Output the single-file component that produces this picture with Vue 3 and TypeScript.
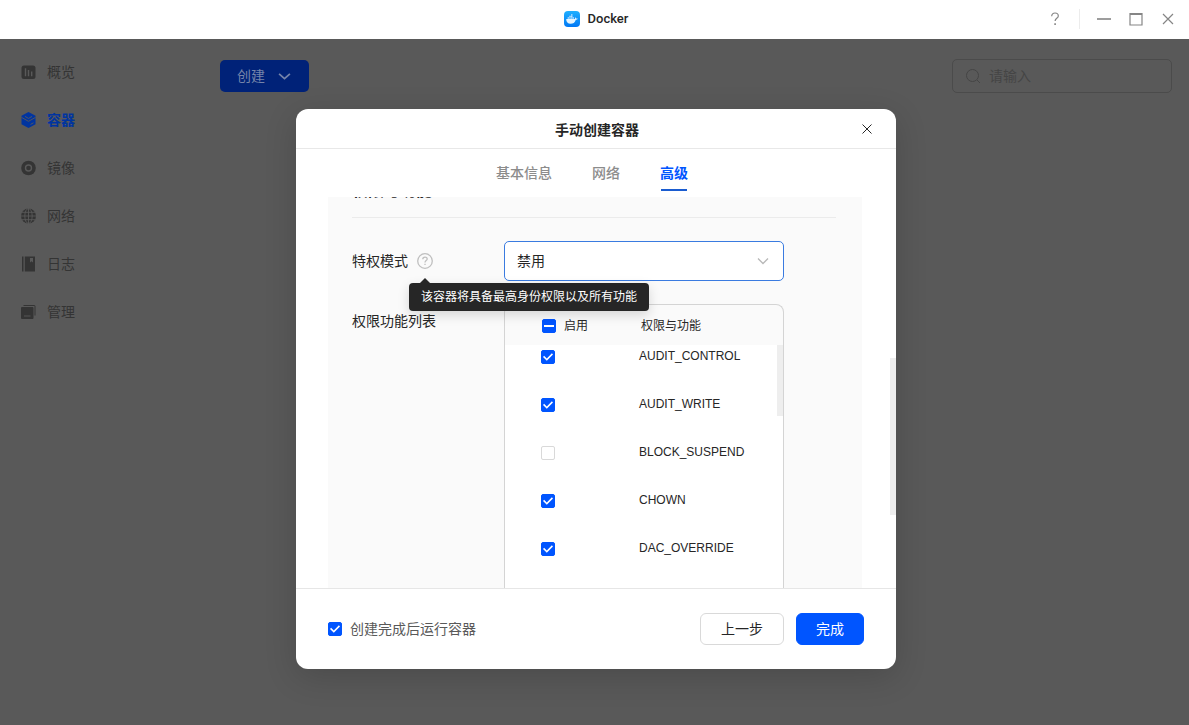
<script setup lang="ts">
import { ref } from 'vue'

type IconName = 'overview' | 'container' | 'image' | 'network' | 'log' | 'manage'

interface NavItem {
  icon: IconName
  label: string
}

interface Capability {
  name: string
  enabled: boolean
}

const navItems: NavItem[] = [
  { icon: 'overview', label: '概览' },
  { icon: 'container', label: '容器' },
  { icon: 'image', label: '镜像' },
  { icon: 'network', label: '网络' },
  { icon: 'log', label: '日志' },
  { icon: 'manage', label: '管理' },
]
const activeNav = ref<IconName>('container')

const tabs = ['基本信息', '网络', '高级']
const activeTab = ref('高级')

const privileged = ref('禁用')
const runAfterCreate = ref(true)
const keyword = ref('')

const capabilities = ref<Capability[]>([
  { name: 'AUDIT_CONTROL', enabled: true },
  { name: 'AUDIT_WRITE', enabled: true },
  { name: 'BLOCK_SUSPEND', enabled: false },
  { name: 'CHOWN', enabled: true },
  { name: 'DAC_OVERRIDE', enabled: true },
])
</script>

<template>
  <div class="window">
    <header class="titlebar">
      <span class="titlebar-side"></span>
      <div class="app-name">
        <svg class="app-logo" viewBox="0 0 16 16" aria-hidden="true">
          <defs>
            <linearGradient id="logo-fill" x1="0" y1="0" x2="0" y2="1">
              <stop offset="0" stop-color="#1fb0ff" />
              <stop offset="1" stop-color="#0078f5" />
            </linearGradient>
          </defs>
          <rect width="16" height="16" rx="4" fill="url(#logo-fill)" />
          <path
            d="M2.2 8h8.500c.5-.4.5-1.300.1-2 .8.3 1.200.9 1.300 1.500.6-.1 1.200 0 1.700.3-.4.8-1.300 1.100-2.100 1.100C10.900 11.500 9.100 12.700 6.600 12.700 3.900 12.700 2.100 11.200 2.200 8z"
            fill="#e4f4ff"
          />
          <path d="M3.600 6.300h1.500v1.400H3.600zM5.300 6.300h1.500v1.400H5.300zM7 6.300h1.500v1.400H7zM5.300 4.700h1.500v1.400H5.300zM7 4.700h1.500v1.400H7zM7 3.200h1.500v1.200H7zM8.700 6.300h1.300v1.400H8.700z" fill="#b9e2ff" />
        </svg>
        <span>Docker</span>
      </div>
      <div class="titlebar-side controls">
        <button type="button" class="control" aria-label="帮助">
          <svg viewBox="0 0 16 16"><path d="M4.700 5.200c0-2 1.400-3.200 3.300-3.200s3.300 1.200 3.300 2.900c0 2.400-3.200 2.500-3.200 5.100" /><path d="M8.100 12.300v1.700" stroke-width="1.600" /></svg>
        </button>
        <span class="control-rule"></span>
        <button type="button" class="control" aria-label="最小化">
          <svg viewBox="0 0 16 16"><path d="M1 8h14" stroke-width="1.600" /></svg>
        </button>
        <button type="button" class="control" aria-label="最大化">
          <svg viewBox="0 0 16 16"><path d="M2 2.500h12v11.500H2z" /><path d="M2 3h12" stroke-width="2" /></svg>
        </button>
        <button type="button" class="control" aria-label="关闭">
          <svg viewBox="0 0 16 16"><path d="M3 3l10 10M13 3L3 13" /></svg>
        </button>
      </div>
    </header>

    <div class="workspace">
      <nav class="sidebar">
        <button
          v-for="item in navItems"
          :key="item.icon"
          type="button"
          class="nav-item"
          :class="{ active: item.icon === activeNav }"
          @click="activeNav = item.icon"
        >
          <svg class="nav-icon" viewBox="0 0 16 16" aria-hidden="true">
            <template v-if="item.icon === 'overview'">
              <rect x="1.500" y="1.500" width="14" height="13.500" rx="2.500" />
              <path class="cut" d="M5.500 4.200v8M8.500 6v6.200M11.700 7.500v4.700" />
            </template>
            <template v-else-if="item.icon === 'container'">
              <path d="M8.500 0l7 3.800v8.400L8.500 16l-7-3.800V3.800z" />
              <path class="cut thin" d="M1.500 5.400l7 3.900 7-3.900M5 4.400l3.500 2 3.500-2M10.500 12.400l3-1.600" />
            </template>
            <template v-else-if="item.icon === 'image'">
              <circle cx="8.500" cy="8" r="7.300" />
              <circle class="cut" cx="8.500" cy="8" r="3" />
              <circle cx="8.500" cy="8" r="1.200" />
            </template>
            <template v-else-if="item.icon === 'network'">
              <circle cx="8.500" cy="8" r="7.500" />
              <path class="cut thin" d="M8.500 0v16M0 8h16M1.500 4.300h14M1.500 11.700h14" />
              <ellipse class="cut thin" cx="8.500" cy="8" rx="3.700" ry="7.500" />
            </template>
            <template v-else-if="item.icon === 'log'">
              <path d="M2 .5h1.500v15H2zM4.800 .5H15v15H4.800z" />
              <path class="gap" d="M10 2h3v4.500l-1.500-1.200L10 6.500z" />
            </template>
            <template v-else>
              <path d="M3.500 1H14a1.500 1.500 0 0 1 1.500 1.500v9h-1V2H3.500z" />
              <rect x="1" y="3" width="12.500" height="12" rx="1" />
              <path class="cut thin" d="M4 12h6.500" />
            </template>
          </svg>
          <span>{{ item.label }}</span>
        </button>
      </nav>

      <main class="main">
        <button type="button" class="create">
          <span>创建</span>
          <svg viewBox="0 0 12 12" aria-hidden="true"><path d="M1 3.500l5 4.500 5-4.500" /></svg>
        </button>
        <label class="search">
          <svg viewBox="0 0 16 16" aria-hidden="true"><circle cx="7.500" cy="7.500" r="6" /><path d="M12 12l3 3" /></svg>
          <input v-model="keyword" type="text" placeholder="请输入" aria-label="搜索" />
        </label>
      </main>

      <div class="backdrop">
        <section class="dialog" role="dialog" aria-labelledby="dialog-title">
          <header class="dialog-head">
            <h1 id="dialog-title">手动创建容器</h1>
            <button type="button" class="dialog-close" aria-label="关闭对话框">
              <svg viewBox="0 0 10 10"><path d="M.5 .5l9 9M9.500 .5l-9 9" /></svg>
            </button>
          </header>

          <div class="tabs" role="tablist">
            <button
              v-for="tab in tabs"
              :key="tab"
              type="button"
              role="tab"
              class="tab"
              :class="{ active: tab === activeTab }"
              :aria-selected="tab === activeTab"
              @click="activeTab = tab"
            >
              {{ tab }}
            </button>
          </div>

          <div class="dialog-body">
            <div class="panel">
              <h2 class="section-title">权限与功能</h2>

              <div class="field">
                <div class="field-label">
                  <label for="privileged">特权模式</label>
                  <span class="help">
                    <svg viewBox="0 0 16 16" aria-hidden="true">
                      <circle cx="8" cy="8" r="7.300" />
                      <path d="M5.800 6.300c0-1.400 1-2.200 2.200-2.200s2.200.8 2.200 1.900c0 1.500-2.200 1.700-2.200 3.400M8 10.800v1.200" />
                    </svg>
                    <span class="tooltip" role="tooltip">该容器将具备最高身份权限以及所有功能</span>
                  </span>
                </div>
                <div class="select">
                  <select id="privileged" v-model="privileged">
                    <option>禁用</option>
                    <option>启用</option>
                  </select>
                  <svg viewBox="0 0 12 12" aria-hidden="true"><path d="M1 3.500l5 5 5-5" /></svg>
                </div>
              </div>

              <div class="field grow">
                <div class="field-label">权限功能列表</div>
                <table class="capabilities">
                  <thead>
                    <tr>
                      <th>
                        <label class="check-label">
                          <input type="checkbox" class="check partial" :indeterminate="true" />启用
                        </label>
                      </th>
                      <th>权限与功能</th>
                    </tr>
                  </thead>
                  <tbody>
                    <tr v-for="cap in capabilities" :key="cap.name">
                      <td><input v-model="cap.enabled" type="checkbox" class="check" :aria-label="cap.name" /></td>
                      <td>{{ cap.name }}</td>
                    </tr>
                  </tbody>
                </table>
              </div>
            </div>
          </div>

          <footer class="dialog-foot">
            <label class="run-after">
              <input v-model="runAfterCreate" type="checkbox" class="check" />创建完成后运行容器
            </label>
            <button type="button" class="btn">上一步</button>
            <button type="button" class="btn primary">完成</button>
          </footer>
        </section>
      </div>
    </div>
  </div>
</template>

<style>
body {
  margin: 0;
}
</style>

<style scoped>
* {
  box-sizing: border-box;
}

.window {
  display: flex;
  flex-direction: column;
  min-height: 100vh;
  font-family: "Liberation Sans", "Noto Sans CJK SC", sans-serif;
  font-size: 14px;
  line-height: 20px;
  color: #262626;
  background: #595959;
}

button,
input,
select {
  margin: 0;
  padding: 0;
  border: 0;
  background: none;
  font: inherit;
  color: inherit;
}

svg {
  display: block;
  fill: none;
  stroke: currentColor;
}

/* Title bar */
.titlebar {
  display: flex;
  align-items: center;
  height: 39px;
  padding: 0 13px 2px 16px;
  background: #fff;
}

.titlebar-side {
  flex: 1;
}

.app-name {
  display: flex;
  align-items: center;
  gap: 8px;
  font-family: Roboto, sans-serif;
  font-size: 13px;
  font-weight: 500;
}

.app-logo {
  width: 16px;
  height: 16px;
  stroke: none;
}

.controls {
  display: flex;
  align-items: center;
  justify-content: flex-end;
  gap: 16px;
  color: #858585;
}

.control svg {
  width: 16px;
  height: 16px;
  stroke-width: 1.2;
}

.control-rule {
  width: 1px;
  height: 20px;
  background: #ececec;
}

/* Workspace behind the dialog */
.workspace {
  position: relative;
  display: flex;
  flex: 1;
}

.sidebar {
  display: flex;
  flex-direction: column;
  width: 200px;
  padding: 9px 0 0 20px;
}

.nav-item {
  display: flex;
  align-items: center;
  gap: 11px;
  height: 48px;
  color: #343434;
}

.nav-item.active {
  font-weight: 700;
  color: #0034a0;
}

.nav-icon {
  width: 16px;
  height: 16px;
  fill: currentColor;
  stroke: none;
}

.cut {
  fill: none;
  stroke: #595959;
  stroke-width: 1.4;
}

.cut.thin {
  stroke-width: 0.9;
}

.gap {
  fill: #595959;
}

.main {
  display: flex;
  flex: 1;
  align-items: flex-start;
  justify-content: space-between;
  padding: 20px 17px 20px 20px;
}

.create {
  display: flex;
  align-items: center;
  gap: 13px;
  height: 32px;
  margin-top: 1px;
  padding: 0 18px 0 17px;
  border-radius: 5px;
  background: #002278;
  color: #7584aa;
}

.create svg {
  width: 13px;
  height: 13px;
  stroke-width: 1.6;
}

.search {
  display: flex;
  align-items: center;
  gap: 8px;
  width: 220px;
  height: 34px;
  padding: 0 12px;
  border: 1px solid #4b4b4b;
  border-radius: 5px;
  color: #454545;
}

.search svg {
  width: 16px;
  height: 16px;
}

.search input {
  flex: 1;
  min-width: 0;
  outline: none;
}

.search input::placeholder {
  color: #454545;
}

/* Dialog */
.backdrop {
  position: absolute;
  inset: 0;
  display: flex;
  align-items: flex-start;
  justify-content: center;
  padding: 70px 0 0 3px;
}

.dialog {
  display: flex;
  flex-direction: column;
  width: 600px;
  height: calc(100vh - 165px);
  border-radius: 12px;
  background: #fff;
  box-shadow: 0 8px 32px rgba(0, 0, 0, 0.16);
}

.dialog-head {
  position: relative;
  display: flex;
  align-items: center;
  justify-content: center;
  height: 40px;
  padding: 2px 0 0 2px;
  border-bottom: 1px solid #e8e8e8;
}

.dialog-head h1 {
  margin: 0;
  font-size: 14px;
  font-weight: 700;
}

.dialog-close {
  position: absolute;
  top: 15px;
  right: 24px;
}

.dialog-close svg {
  width: 10px;
  height: 10px;
}

.tabs {
  display: flex;
  justify-content: center;
  gap: 40px;
  height: 48px;
  padding: 14px 8px 6px 0;
}

.tab {
  display: flex;
  flex-direction: column;
  justify-content: space-between;
  align-items: center;
  color: #8c8c8c;
  font-weight: 500;
}

.tab.active {
  color: #0055ff;
  font-weight: 700;
}

.tab.active::after {
  content: "";
  width: 26px;
  height: 2px;
  background: #1a5cd0;
}

.dialog-body {
  position: relative;
  display: flex;
  flex: 1;
  min-height: 0;
  padding: 0 34px 0 32px;
  overflow: hidden;
}

.dialog-body::after {
  content: "";
  position: absolute;
  top: 161px;
  right: 0;
  width: 6px;
  height: 157px;
  background: #eee;
}

.panel {
  display: flex;
  flex: 1;
  flex-direction: column;
  padding: 0 26px 0 24px;
  background: #fafafa;
}

/* The form is scrolled so that only the foot of this heading shows. */
.section-title {
  margin: -16px 0 23px;
  padding-bottom: 16px;
  border-bottom: 1px solid #ebebeb;
  font-size: 16px;
  font-weight: 700;
  line-height: 20px;
}

.field {
  display: flex;
  align-items: flex-start;
  margin-bottom: 23px;
}

.field.grow {
  flex: 1;
  margin-bottom: 0;
}

.field-label {
  display: flex;
  align-items: center;
  gap: 9px;
  width: 152px;
  padding-top: 10px;
}

.grow .field-label {
  padding-top: 7px;
}

.help {
  position: relative;
  color: #bfbfbf;
}

.help svg {
  width: 16px;
  height: 16px;
  stroke-width: 1.3;
}

.tooltip {
  position: absolute;
  top: 30px;
  left: -8px;
  z-index: 2;
  padding: 4px 12px;
  border-radius: 4px;
  background: #262626;
  box-shadow: 0 4px 12px rgba(0, 0, 0, 0.15);
  color: #fff;
  font-size: 12px;
  white-space: nowrap;
}

.tooltip::before {
  content: "";
  position: absolute;
  top: -5px;
  left: 11px;
  border: 5px solid transparent;
  border-top: 0;
  border-bottom-color: #262626;
}

.select {
  display: flex;
  align-items: center;
  width: 280px;
  height: 40px;
  border: 1px solid #3a7be0;
  border-radius: 5px;
  background: #fff;
}

.select select {
  flex: 1;
  height: 38px;
  margin-right: -26px;
  padding: 0 26px 0 12px;
  appearance: none;
  outline: none;
}

.select svg {
  width: 12px;
  height: 12px;
  margin-right: 14px;
  color: #b8b8b8;
  stroke-width: 1.3;
  pointer-events: none;
}

.capabilities {
  position: relative;
  display: flex;
  flex-direction: column;
  align-self: stretch;
  width: 280px;
  border: 1px solid #d4d4d4;
  border-bottom: 0;
  border-radius: 8px 8px 0 0;
  font-size: 12px;
}

.capabilities thead {
  display: block;
}

.capabilities tbody {
  display: flex;
  flex: 1;
  flex-direction: column;
  background: #fff;
  overflow: hidden;
}

.capabilities::after {
  content: "";
  position: absolute;
  top: 40px;
  right: 0;
  width: 6px;
  height: 71px;
  background: #eee;
}

.capabilities tr {
  display: flex;
  flex: none;
  align-items: center;
  height: 48px;
  padding-left: 36px;
}

.capabilities thead tr {
  height: 40px;
  padding: 2px 0 0 37px;
}

.capabilities tbody tr:first-child {
  margin-top: -13px;
}

.capabilities th,
.capabilities td {
  padding: 0;
  font-weight: 400;
  text-align: left;
}

.capabilities th:first-child {
  width: 99px;
}

.capabilities td:first-child {
  width: 98px;
  padding-top: 2px;
}

.check-label,
.run-after {
  display: flex;
  align-items: center;
  gap: 8px;
}

.check {
  display: grid;
  place-items: center;
  width: 14px;
  height: 14px;
  border: 1px solid #d9d9d9;
  border-radius: 2px;
  background: #fff;
  appearance: none;
}

.check:checked,
.check.partial {
  border-color: #0055ff;
  background: #0055ff;
}

.check:checked::after {
  content: "";
  width: 10px;
  height: 8px;
  background: #fff;
  clip-path: polygon(0 50%, 11% 35%, 38% 68%, 89% 4%, 100% 18%, 38% 97%);
}

.check.partial::after {
  content: "";
  width: 10px;
  height: 2px;
  background: #fff;
}

.dialog-foot {
  display: flex;
  align-items: center;
  gap: 12px;
  height: 81px;
  padding: 0 32px;
  border-top: 1px solid #e6e6e6;
}

.run-after {
  margin-right: auto;
  color: #595959;
}

.btn {
  height: 32px;
  padding: 0 20px;
  border: 1px solid #d9d9d9;
  border-radius: 6px;
  background: #fff;
}

.btn.primary {
  padding: 0 19px;
  border-color: #0055ff;
  background: #0055ff;
  color: #fff;
}
</style>
